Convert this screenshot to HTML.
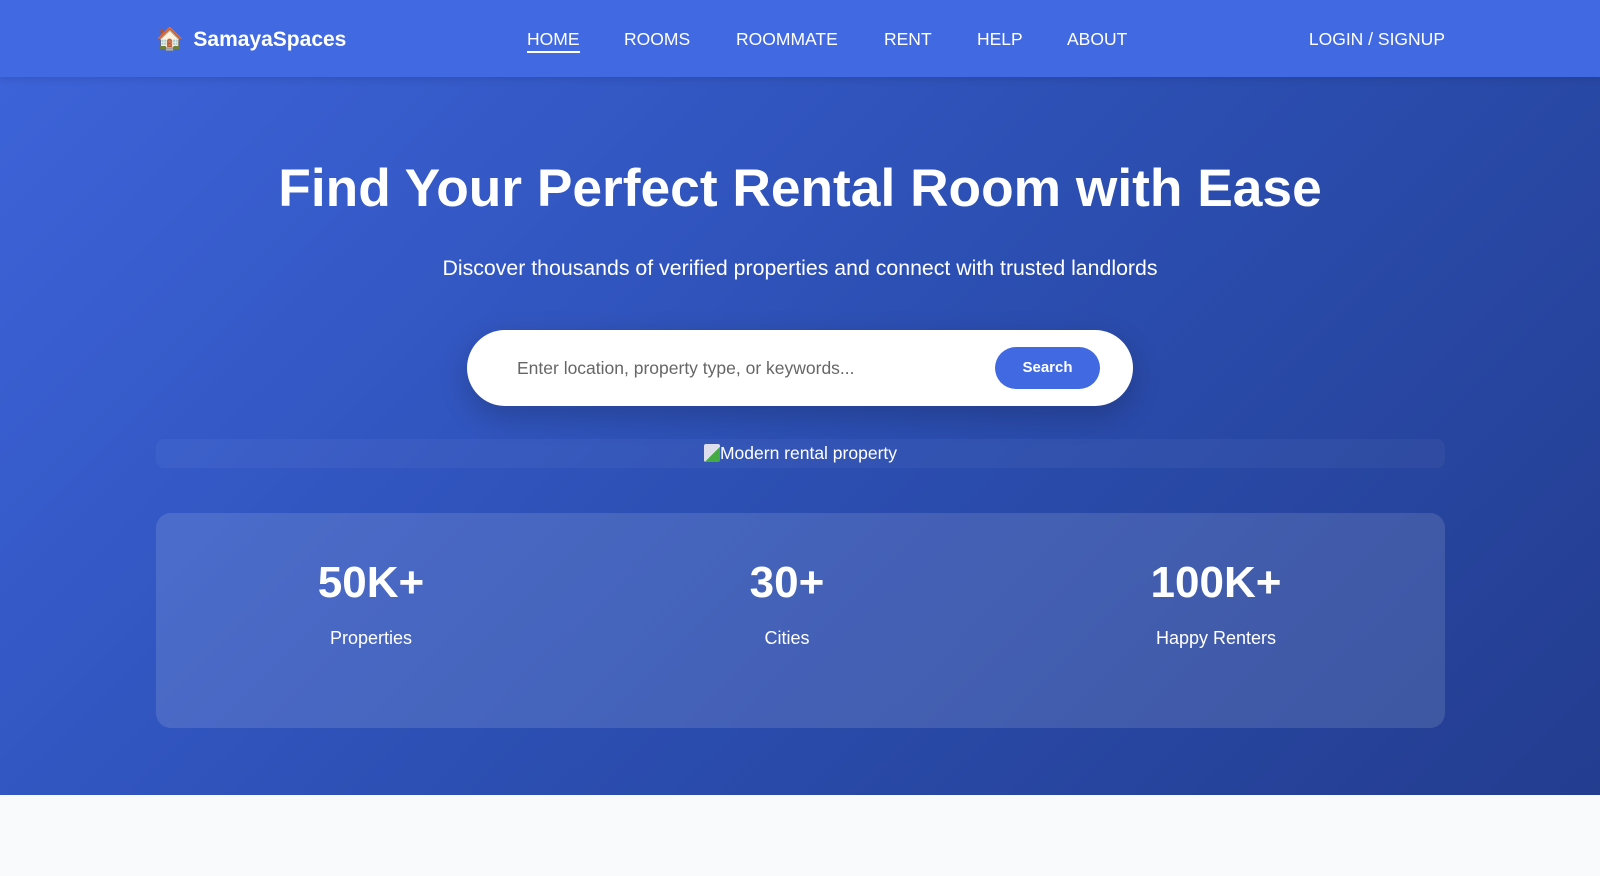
<!DOCTYPE html>
<html><head><meta charset="utf-8"><style>
*{margin:0;padding:0;box-sizing:border-box}
body{width:1600px;height:876px;overflow:hidden;background:#f8fafc;font-family:"Liberation Sans",Arial,sans-serif;color:#fff;position:relative}
nav{position:absolute;left:0;top:0;width:1600px;height:77px;background:#4169e1;box-shadow:0 2px 8px rgba(0,0,0,.12);z-index:2}
.logo{position:absolute;left:156px;top:27px;font-size:21px;font-weight:bold;display:flex;align-items:center;gap:10px}
.logo span.i{font-size:22px;font-family:"DejaVu Sans",sans-serif}
.links a{position:absolute;top:29px;font-size:17.5px;color:#fff;text-decoration:none}
.home{border-bottom:2px solid #fff;padding-bottom:1px}
.login{position:absolute;right:155px;top:29px;font-size:17.5px}
.hero{position:absolute;left:0;top:77px;width:1600px;height:718px;background:linear-gradient(135deg,#3d63d9 0%,#2c4fb3 50%,#233d8f 100%)}
h1{position:absolute;top:81px;left:0;width:1600px;text-align:center;font-size:53.3px;font-weight:bold}
.sub{position:absolute;top:179px;left:0;width:1600px;text-align:center;font-size:21.3px}
.search{position:absolute;left:467px;top:253px;width:666px;height:76px;background:#fff;border-radius:38px;box-shadow:0 10px 30px rgba(0,0,0,.2)}
.search .ph{position:absolute;left:50px;top:28px;font-size:17.5px;color:#666}
.search .btn{position:absolute;left:528px;top:17px;width:105px;height:42px;border-radius:21px;background:#4169e1;color:#fff;font-weight:bold;font-size:15px;text-align:center;line-height:42px}
.imgband{position:absolute;left:156px;top:362px;width:1289px;height:29px;background:rgba(255,255,255,.04);border-radius:8px;text-align:center;font-size:17.5px;line-height:29px}
.imgband i{display:inline-block;width:16px;height:18px;vertical-align:-3px;background:linear-gradient(135deg,#dde 55%,#4a4 55%);border-radius:2px}
.stats{position:absolute;left:156px;top:436px;width:1289px;height:215px;background:rgba(255,255,255,.12);border-radius:15px}
.st{position:absolute;top:45px;text-align:center;width:300px}
.st b{display:block;font-size:44px}
.st span{display:block;margin-top:20px;font-size:18px}
</style></head><body>
<nav>
<div class="logo"><span class="i">🏠</span>SamayaSpaces</div>
<div class="links">
<a class="home" style="left:527px">HOME</a>
<a style="left:624px">ROOMS</a>
<a style="left:736px">ROOMMATE</a>
<a style="left:884px">RENT</a>
<a style="left:977px">HELP</a>
<a style="left:1067px">ABOUT</a>
</div>
<div class="login">LOGIN / SIGNUP</div>
</nav>
<div class="hero">
<h1>Find Your Perfect Rental Room with Ease</h1>
<div class="sub">Discover thousands of verified properties and connect with trusted landlords</div>
<div class="search"><div class="ph">Enter location, property type, or keywords...</div><div class="btn">Search</div></div>
<div class="imgband"><i></i>Modern rental property</div>
<div class="stats">
<div class="st" style="left:65px"><b>50K+</b><span>Properties</span></div>
<div class="st" style="left:481px"><b>30+</b><span>Cities</span></div>
<div class="st" style="left:910px"><b>100K+</b><span>Happy Renters</span></div>
</div>
</div>
</body></html>
